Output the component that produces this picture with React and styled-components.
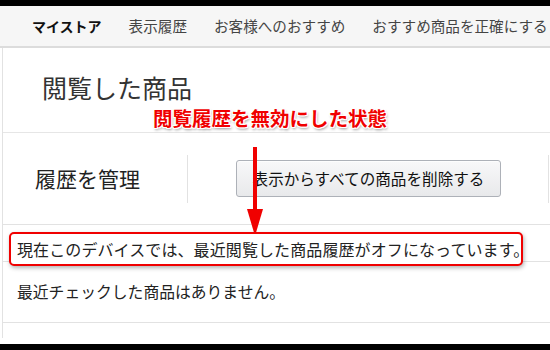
import styled, { createGlobalStyle } from "styled-components";

const GlobalStyle = createGlobalStyle`
  html, body {
    margin: 0;
    padding: 0;
    background: #000;
  }
  body {
    font-family: "Noto Sans CJK JP", "Noto Sans", sans-serif;
    color: #222;
  }
`;

const navItems = [
  { label: "マイストア", bold: true },
  { label: "表示履歴" },
  { label: "お客様へのおすすめ" },
  { label: "おすすめ商品を正確にする" },
];

function App() {
  return (
    <>
      <GlobalStyle />
      <Frame>
        <Nav>
          {navItems.map((item) => (
            <NavItem key={item.label} $bold={item.bold}>
              {item.label}
            </NavItem>
          ))}
        </Nav>
        <Content>
          <TitleRow>
            <Title>閲覧した商品</Title>
          </TitleRow>
          <ManageRow>
            <LabelCell>履歴を管理</LabelCell>
            <ClearButton>表示からすべての商品を削除する</ClearButton>
            <Spacer />
            <Separator />
          </ManageRow>
          <NoticeRow>
            <Highlight>現在このデバイスでは、最近閲覧した商品履歴がオフになっています。</Highlight>
          </NoticeRow>
          <EmptyRow>最近チェックした商品はありません。</EmptyRow>
        </Content>

        {/* annotation drawn over the page */}
        <Callout>閲覧履歴を無効にした状態</Callout>
        <Arrow width="18" height="90" viewBox="0 0 18 90">
          <rect x="6" y="0" width="4" height="64" fill="#f00000" />
          <polygon points="0,62 16,62 8,89" fill="#f00000" />
        </Arrow>
      </Frame>
    </>
  );
}

const Frame = styled.div`
  position: relative;
  margin-top: 6px;
  width: 550px;
  height: 338px;
  background: #fff;
  overflow: hidden;
`;

const Nav = styled.nav`
  display: flex;
  align-items: center;
  gap: 27px;
  height: 40px;
  padding-left: 32px;
  background: #f6f6f6;
  border-bottom: 2px solid #dcdcdc;
  white-space: nowrap;
  overflow: hidden;
`;

const NavItem = styled.span`
  flex-shrink: 0;
  font-size: ${(p) => (p.$bold ? "14px" : "14.6px")};
  line-height: 1;
  font-weight: ${(p) => (p.$bold ? 700 : 400)};
  color: ${(p) => (p.$bold ? "#111" : "#444")};
`;

const Content = styled.div`
  margin-left: 2px;
  border-left: 1px solid #e2e2e2;
  height: 290px;
`;

const TitleRow = styled.div`
  height: 57px;
  padding: 27px 0 0 39px;
  border-bottom: 1px solid #e6e6e6;
`;

const Title = styled.h1`
  margin: 0;
  font-size: 25px;
  line-height: 1;
  font-weight: 400;
  color: #333;
`;

const ManageRow = styled.div`
  display: flex;
  align-items: center;
  height: 91px;
  border-bottom: 1px solid #e2e2e2;
`;

const LabelCell = styled.div`
  display: flex;
  align-items: center;
  width: 152px;
  height: 48px;
  padding-left: 32px;
  border-right: 1px solid #e2e2e2;
  font-size: 21px;
  line-height: 1;
  color: #222;
`;

const ClearButton = styled.button`
  margin-left: 48px;
  width: 265px;
  height: 37px;
  padding: 0;
  border: 1px solid #adb1b8;
  border-radius: 3px;
  background: linear-gradient(#f8f8f9, #e8e9eb);
  box-shadow: inset 0 1px 0 rgba(255, 255, 255, 0.7);
  font-family: inherit;
  font-size: 15.6px;
  line-height: 1;
  color: #111;
`;

const Spacer = styled.div`
  flex: 1;
`;

const Separator = styled.div`
  width: 1px;
  height: 48px;
  margin-right: 1px;
  background: #e2e2e2;
`;

const NoticeRow = styled.div`
  height: 29px;
  padding-top: 7px;
  border-bottom: 1px solid #e2e2e2;
`;

const Highlight = styled.div`
  position: relative;
  z-index: 1;
  display: flex;
  align-items: center;
  box-sizing: border-box;
  width: 514px;
  height: 34px;
  margin-left: 6px;
  padding-left: 6px;
  border: 2px solid #f00000;
  border-radius: 5px;
  background: #fff;
  box-shadow: 1px 2px 4px rgba(0, 0, 0, 0.3);
  font-size: 16px;
  letter-spacing: 0.1px;
  line-height: 1;
  color: #222;
  white-space: nowrap;
`;

const EmptyRow = styled.div`
  display: flex;
  align-items: center;
  height: 60px;
  padding-left: 14px;
  border-bottom: 1px solid #e2e2e2;
  font-size: 15.8px;
  line-height: 1;
  color: #222;
`;

const Callout = styled.div`
  position: absolute;
  left: 153px;
  top: 102px;
  font-size: 19.5px;
  line-height: 1;
  font-weight: 700;
  color: #f00000;
  white-space: nowrap;
  text-shadow:
    -1px -1px 0 #fff, 1px -1px 0 #fff, -1px 1px 0 #fff, 1px 1px 0 #fff,
    0 -1px 0 #fff, 0 1px 0 #fff, -1px 0 0 #fff, 1px 0 0 #fff,
    1px 2px 3px rgba(0, 0, 0, 0.45);
`;

const Arrow = styled.svg`
  position: absolute;
  left: 247px;
  top: 141px;
`;

export default App;
